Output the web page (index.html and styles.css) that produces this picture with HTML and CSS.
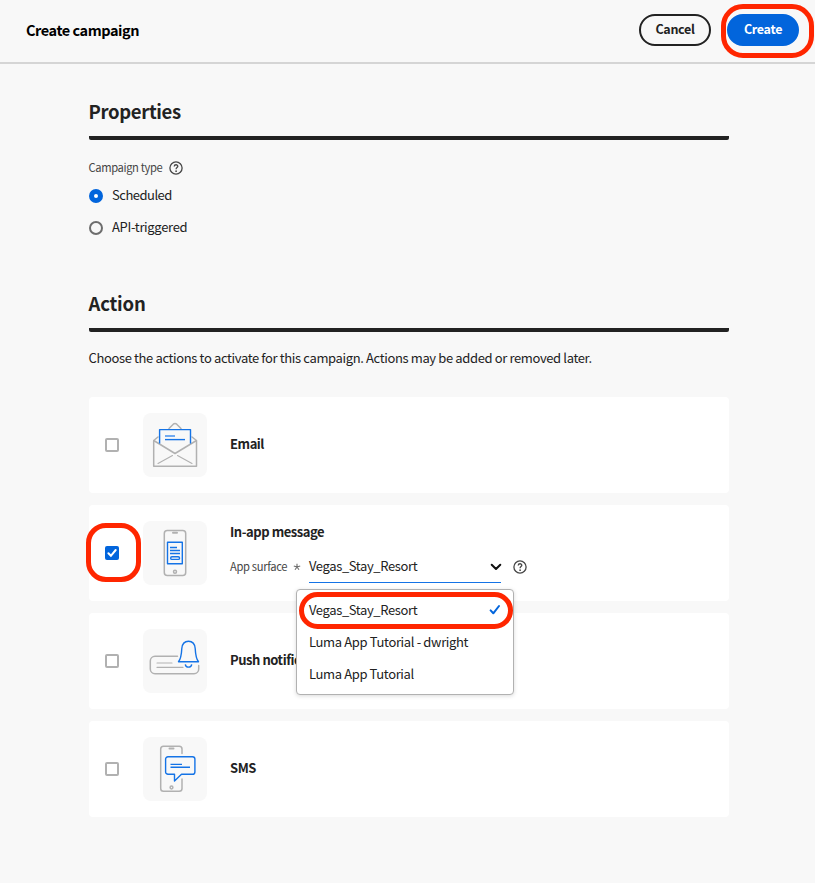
FILE: index.html
```html
<!DOCTYPE html>
<html lang="en">
<head>
<meta charset="utf-8">
<title>Create campaign</title>
<link rel="stylesheet" href="styles.css">
</head>
<body>
<header class="topbar">
  <h1 class="topbar-title">Create campaign</h1>
  <div class="topbar-actions">
    <button class="btn btn-outline"><span class="btn-label">Cancel</span></button>
    <button class="btn btn-primary"><span class="btn-label">Create</span><span class="ring ring-create"></span></button>
  </div>
</header>
<main class="content">
  <section class="section">
    <h2 class="section-title">Properties</h2>
    <div class="field-label">
      <span class="label-text">Campaign type</span>
      <svg class="help" viewBox="0 0 14 14"><circle cx="7" cy="7" r="6.1"/><path d="M5.2 5.5C5.3 3.1 8.9 3.2 8.8 5.4C8.7 6.7 7.1 6.6 7.1 8.2"/><circle class="dot" cx="7.1" cy="10.2" r=".85"/></svg>
    </div>
    <div class="radio"><span class="radio-dot checked"></span><span class="radio-text">Scheduled</span></div>
    <div class="radio"><span class="radio-dot"></span><span class="radio-text api">API-triggered</span></div>
  </section>
  <section class="section section-action">
    <h2 class="section-title action">Action</h2>
    <p class="description">Choose the actions to activate for this campaign. Actions may be added or removed later.</p>
    <div class="cards">
      <article class="card">
        <span class="checkbox"></span>
        <span class="thumb"><svg viewBox="0 0 64 64">
          <g class="gray"><path d="M26 15.5L30.3 11.2Q32 9.8 33.7 11.2L38 15.5M15 24L10.7 27.5V53.3H53.5V27.5L49 24M10.7 27.5L32 40.5L53.5 27.5"/><path class="thin" d="M15 50.5L29.5 42.5M34.5 42.5L49 50.5"/></g>
          <g class="blue"><path d="M16.6 30.5V16.6H47.5V30.5"/><path class="soft" d="M22 23H32"/><path d="M22 26.6H42"/></g>
        </svg></span>
        <h3 class="card-title email">Email</h3>
      </article>
      <article class="card card-open">
        <span class="checkbox checked"><svg viewBox="0 0 14 14"><path d="M3.4 7.2L5.9 9.8L10.7 4"/></svg><span class="ring ring-check"></span></span>
        <span class="thumb"><svg viewBox="0 0 64 64">
          <g class="gray"><rect x="21.3" y="9.5" width="21.4" height="45" rx="3"/><path class="thick" d="M30 11.8H34"/><circle cx="32" cy="50.8" r="1.5"/></g>
          <g class="blue"><rect x="24.5" y="21.3" width="14.8" height="21.4"/><path d="M27 26.5H34M27 29.5H37M27 32.5H37"/><rect x="27.7" y="35.8" width="8.8" height="2.6" rx="1.2"/></g>
        </svg></span>
        <div class="card-body">
          <h3 class="card-title inapp">In-app message</h3>
          <div class="surface">
            <span class="label-text surface-label">App surface</span>
            <svg class="asterisk" viewBox="0 0 8 8"><path d="M4 4V.7M4 4L.8 3M4 4L7.2 3M4 4L2 6.8M4 4L6 6.8"/></svg>
            <div class="picker">
              <span class="picker-value">Vegas_Stay_Resort</span>
              <svg class="chevron" viewBox="0 0 12 8"><path d="M1.7 1.7L6 6L10.3 1.7"/></svg>
              <div class="menu">
                <div class="option"><span class="picker-value">Vegas_Stay_Resort</span><svg class="tick" viewBox="0 0 12 12"><path d="M1.6 6.4L4.3 9.3L10 2"/></svg><span class="ring ring-option"></span></div>
                <div class="option"><span class="opt-dw">Luma App Tutorial - dwright</span></div>
                <div class="option"><span class="opt-luma">Luma App Tutorial</span></div>
              </div>
            </div>
            <svg class="help" viewBox="0 0 14 14"><circle cx="7" cy="7" r="6.1"/><path d="M5.2 5.5C5.3 3.1 8.9 3.2 8.8 5.4C8.7 6.7 7.1 6.6 7.1 8.2"/><circle class="dot" cx="7.1" cy="10.2" r=".85"/></svg>
          </div>
        </div>
      </article>
      <article class="card">
        <span class="checkbox"></span>
        <span class="thumb"><svg viewBox="0 0 64 64">
          <g class="gray"><path d="M34.5 27.3H12A4.7 4.7 0 0 0 7.3 32V40A4.7 4.7 0 0 0 12 44.7H51A4.7 4.7 0 0 0 55.7 40V36.5"/><path class="thin" d="M14 34H29M14 38.4H40"/></g>
          <g class="blue"><path d="M35.5 32.8H55.5C52.8 29.5 52.5 25.5 52.2 19.5C51.8 14.5 49.2 12.2 45.5 12.2S39.2 14.5 38.8 19.5C38.5 25.5 38.2 29.5 35.5 32.8ZM42.3 35.3C42.8 39 48.2 39 48.7 35.3"/></g>
        </svg></span>
        <h3 class="card-title push">Push notification</h3>
      </article>
      <article class="card">
        <span class="checkbox"></span>
        <span class="thumb"><svg viewBox="0 0 64 64">
          <g class="gray"><path d="M39 16.5V12A2.8 2.8 0 0 0 36.2 9.2H20.5A2.8 2.8 0 0 0 17.7 12V51.5A2.8 2.8 0 0 0 20.5 54.3H36.2A2.8 2.8 0 0 0 39 51.5V42"/><path class="thick" d="M26.5 11.5H30.5"/><circle cx="28.5" cy="50.5" r="1.4"/></g>
          <g class="blue"><path d="M25 19.7H49.5A2.4 2.4 0 0 1 51.9 22.1V34.9A2.4 2.4 0 0 1 49.5 37.3H38.5L31.5 44V37.3H25A2.4 2.4 0 0 1 22.6 34.9V22.1A2.4 2.4 0 0 1 25 19.7Z"/><path d="M27.5 27.4H39M27.5 30.3H47"/></g>
        </svg></span>
        <h3 class="card-title sms">SMS</h3>
      </article>
    </div>
  </section>
</main>
</body>
</html>
```
FILE: styles.css
```css
* { box-sizing: border-box; }
body {
  margin: 0;
  min-height: 883px;
  background: #f8f8f8;
  color: #222;
  font-family: "Noto Sans CJK SC", "Noto Sans", sans-serif;
  font-size: 13px;
  line-height: 20px;
  letter-spacing: -0.38px;
}
h1, h2, h3, p { margin: 0; }
svg { display: block; fill: none; }

.topbar {
  display: flex;
  align-items: center;
  justify-content: space-between;
  height: 64px;
  padding: 0 16px 2px 26px;
  border-bottom: 2px solid #d5d5d5;
}
.topbar-title { font-size: 14.5px; letter-spacing: -0.45px; color: #000; }
.topbar-actions { display: flex; gap: 16px; }
.btn {
  position: relative;
  width: 72px;
  height: 32px;
  padding: 0 0 2px;
  border: 2px solid #222;
  border-radius: 16px;
  background: transparent;
  color: #222;
  font: bold 12.5px/20px "Noto Sans CJK SC", "Noto Sans", sans-serif;
  letter-spacing: -0.3px;
}
.btn-primary { background: #0265dc; border-color: #0265dc; color: #fff; }

.ring { position: absolute; border: 5px solid #ff2600; pointer-events: none; }
.ring-create { left: -8.5px; top: -12.5px; width: 93px; height: 54.5px; border-radius: 22px; }
.ring-check { left: -19.5px; top: -23.5px; width: 55px; height: 59px; border-radius: 20px; }
.ring-option { left: 1.5px; top: -2.5px; width: 214px; height: 37px; border-radius: 18.5px; }

.content { width: 640px; margin-left: 89px; padding-top: 34px; }
.section-title {
  height: 42px;
  padding-top: 1px;
  border-bottom: 4px solid #222;
  border-radius: 2px;
  font-size: 18.5px;
  line-height: 24px;
  letter-spacing: -0.35px;
  text-indent: -0.5px;
}
.section-title.action { letter-spacing: -0.2px; }
.field-label { display: flex; align-items: center; gap: 7px; height: 24px; margin-top: 16px; }
.label-text { font-size: 11.2px; color: #464646; padding-bottom: 2px; text-indent: -0.5px; }
.surface-label { letter-spacing: -0.33px; }
.help { width: 14px; height: 14px; stroke: #464646; stroke-width: 1.3; }
.help .dot { fill: #464646; stroke: none; }
.radio { display: flex; align-items: center; gap: 9px; height: 32px; }
.radio-dot { width: 14px; height: 14px; border: 2px solid #6d6d6d; border-radius: 50%; }
.radio-dot.checked { border: 5px solid #0265dc; background: #fff; }
.radio-text { padding-bottom: 2px; letter-spacing: -0.5px; }
.radio-text.api { letter-spacing: -0.32px; }
.section-action { margin-top: 46px; }
.description { margin-top: 16px; letter-spacing: -0.37px; text-indent: -0.5px; }
.cards { display: flex; flex-direction: column; gap: 12px; margin-top: 29px; }

.card {
  display: flex;
  align-items: center;
  height: 96px;
  padding: 0 16px;
  border-radius: 4px;
  background: #fff;
}
.card-open { position: relative; z-index: 1; }
.checkbox {
  position: relative;
  width: 14px;
  height: 14px;
  border: 2px solid #b1b1b1;
  border-radius: 2px;
}
.checkbox.checked { border: 0; background: #0265dc; }
.checkbox.checked svg { width: 14px; height: 14px; stroke: #fff; stroke-width: 2; stroke-linecap: round; }
.thumb { width: 64px; height: 64px; margin: 0 23px 0 24px; border-radius: 8px; background: #f8f8f8; }
.gray { stroke: #b1b1b1; stroke-width: 1.5; stroke-linecap: round; stroke-linejoin: round; }
.gray .thick { stroke-width: 2; }
.gray .thin { stroke-width: 1.1; }
.blue { stroke: #1473e6; stroke-width: 1.4; stroke-linejoin: round; }
.blue .soft { stroke: #72aaf0; stroke-width: 2; }
.card-title { font-size: 13px; padding-bottom: 2px; letter-spacing: -0.45px; }
.card-body { height: 96px; padding-top: 17px; }
.surface { display: flex; align-items: center; height: 32px; margin-top: 7px; }
.surface-label { width: 58px; white-space: nowrap; text-indent: 0; }
.asterisk { width: 8px; height: 8px; margin: 0 8px 0 5px; stroke: #6d6d6d; stroke-width: 1.1; }
.picker {
  position: relative;
  display: flex;
  align-items: center;
  justify-content: space-between;
  width: 192px;
  height: 32px;
  margin-right: 12px;
  border-bottom: 1px solid #1473e6;
}
.picker-value { padding-bottom: 1px; }
.chevron { width: 12px; height: 8px; margin-right: -1px; stroke: #111; stroke-width: 2; stroke-linecap: round; stroke-linejoin: round; }
.menu {
  position: absolute;
  left: -13px;
  top: 38px;
  width: 218px;
  height: 106px;
  padding: 4px 0;
  border: 1px solid #b1b1b1;
  border-radius: 4px;
  background: #fff;
  box-shadow: 0 1px 4px rgba(0, 0, 0, .15);
}
.option {
  position: relative;
  display: flex;
  align-items: center;
  justify-content: space-between;
  height: 32px;
  padding: 0 12px;
}
.opt-dw, .opt-luma { padding-bottom: 1px; }
.opt-dw { letter-spacing: -0.36px; }
.tick { width: 12px; height: 12px; stroke: #0265dc; stroke-width: 2; stroke-linecap: round; stroke-linejoin: round; }
```
